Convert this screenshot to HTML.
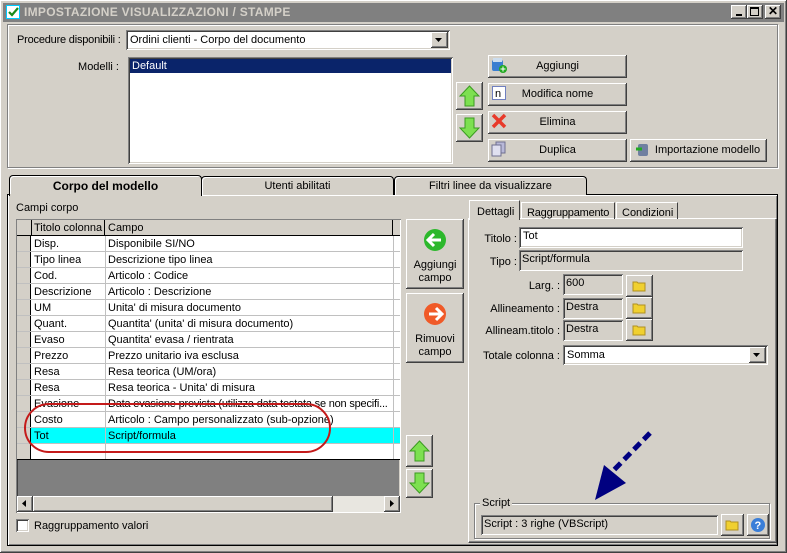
<!DOCTYPE html>
<html><head><meta charset="utf-8"><style>
*{box-sizing:border-box;margin:0;padding:0}
body{width:787px;height:553px;background:#d4d0c8;font-family:"Liberation Sans",sans-serif;font-size:11px;color:#000;position:relative;overflow:hidden;white-space:nowrap}
.a{position:absolute}
.btn{position:absolute;background:#d4d0c8;box-shadow:inset -1px -1px #404040,inset 1px 1px #fff,inset -2px -2px #808080;text-align:center}
.sunk{position:absolute;background:#fff;box-shadow:inset 1px 1px #808080,inset -1px -1px #fff,inset 2px 2px #404040,inset -2px -2px #d4d0c8}
.etch{position:absolute;border:1px solid #808080;box-shadow:1px 1px #fff,inset 1px 1px #fff}
.lbl{position:absolute;text-align:right}
.row{position:absolute;left:17px;width:383px;height:16px;border-bottom:1px solid #c0c0c0;background:#fff;overflow:hidden}
.row span{position:absolute;top:2px;overflow:hidden}
.ind{position:absolute;left:0;top:0;width:14px;height:16px;background:#d4d0c8;border-right:1px solid #000;border-bottom:1px solid #808080}
.c1{position:absolute;left:88px;top:0;height:16px;border-left:1px solid #c0c0c0}
.c2{position:absolute;left:376px;top:0;height:16px;border-left:1px solid #c0c0c0}
.tab{position:absolute;background:#d4d0c8;border:1px solid #000;border-bottom:none;border-radius:4px 4px 0 0;box-shadow:inset 1px 1px #fff;text-align:center}
</style></head><body>
<div class="a" style="left:0;top:0;width:787px;height:553px;box-shadow:inset -1px -1px #404040,inset 1px 1px #fff,inset -2px -2px #808080"></div>
<div class="a" style="left:3px;top:3px;width:781px;height:19px;background:#808080"></div>
<div class="a" style="left:6px;top:5px;width:14px;height:14px;background:#fff;border:1px solid #0cf"><svg width="12" height="12"><path d="M2 6l3 3 6-7" stroke="#1a8a1a" stroke-width="2.2" fill="none"/></svg></div>
<div class="a" style="left:24px;top:5px;font-weight:bold;font-size:12px;color:#d4d0c8;letter-spacing:0.3px">IMPOSTAZIONE VISUALIZZAZIONI / STAMPE</div>
<div class="btn" style="left:731px;top:5px;width:16px;height:14px"><div class="a" style="left:5px;top:9px;width:6px;height:2px;background:#000"></div></div>
<div class="btn" style="left:747px;top:5px;width:16px;height:14px"><div class="a" style="left:3px;top:2px;width:9px;height:9px;border:1px solid #000;border-top-width:2px"></div></div>
<div class="btn" style="left:765px;top:5px;width:16px;height:14px;font-weight:bold;font-size:12px;line-height:13px">✕</div>

<div class="etch" style="left:7px;top:24px;width:771px;height:144px"></div>
<div class="a" style="left:17px;top:34px;letter-spacing:-0.2px">Procedure disponibili :</div>
<div class="sunk" style="left:126px;top:30px;width:324px;height:20px"><span class="a" style="left:4px;top:4px">Ordini clienti - Corpo del documento</span>
<div class="btn" style="left:305px;top:2px;width:17px;height:16px"><svg class="a" style="left:4px;top:6px" width="8" height="5"><path d="M0 0h7l-3.5 4z"/></svg></div></div>
<div class="lbl" style="left:60px;top:61px;width:59px">Modelli :</div>
<div class="sunk" style="left:128px;top:57px;width:325px;height:107px"><div class="a" style="left:2px;top:2px;width:321px;height:14px;background:#0a246a;color:#fff;padding:1px 2px">Default</div></div>

<div class="btn" style="left:456px;top:82px;width:27px;height:28px"><svg class="a" style="left:3px;top:3px" width="21" height="22"><path d="M10.5 1L20 11h-5v10H6V11H1z" fill="#7de050" stroke="#3a9a20"/></svg></div>
<div class="btn" style="left:456px;top:114px;width:27px;height:28px"><svg class="a" style="left:3px;top:3px" width="21" height="22"><path d="M10.5 21L20 11h-5V1H6v10H1z" fill="#7de050" stroke="#3a9a20"/></svg></div>

<div class="btn" style="left:488px;top:55px;width:139px;height:23px;line-height:23px">Aggiungi<svg class="a" style="left:3px;top:2px" width="16" height="16"><rect x="1" y="3" width="11" height="11" rx="2" fill="#3a7ed0"/><rect x="2" y="1" width="9" height="4" fill="#cde"/><circle cx="12" cy="12" r="4" fill="#2a2"/><path d="M12 9.5v5M9.5 12h5" stroke="#fff"/></svg></div>
<div class="btn" style="left:488px;top:83px;width:139px;height:23px;line-height:23px">Modifica nome<svg class="a" style="left:4px;top:3px" width="15" height="15"><rect x="0.5" y="0.5" width="13" height="13" fill="#fff" stroke="#7080c0"/><text x="3" y="11" font-size="11" font-family="Liberation Sans">n</text></svg></div>
<div class="btn" style="left:488px;top:111px;width:139px;height:23px;line-height:23px">Elimina<svg class="a" style="left:3px;top:2px" width="16" height="16"><path d="M2 2L14 14M14 2L2 14" stroke="#e83a2a" stroke-width="3.5"/></svg></div>
<div class="btn" style="left:488px;top:139px;width:139px;height:23px;line-height:23px">Duplica<svg class="a" style="left:3px;top:2px" width="16" height="16"><rect x="5" y="1" width="9" height="11" fill="#b8b8d8" stroke="#707090"/><rect x="1" y="4" width="9" height="11" fill="#e0e0f0" stroke="#707090"/></svg></div>
<div class="btn" style="left:630px;top:139px;width:137px;height:23px;line-height:23px;padding-left:18px">Importazione modello<svg class="a" style="left:6px;top:3px" width="14" height="15"><rect x="2" y="2" width="10" height="12" rx="2" fill="#7080a0"/><path d="M0 7h6" stroke="#2a2" stroke-width="3"/></svg></div>

<div class="a" style="left:7px;top:194px;width:771px;height:352px;border:1px solid #000;box-shadow:inset 1px 1px #fff,inset -1px -1px #808080"></div>
<div class="tab" style="left:9px;top:175px;width:193px;height:21px;font-weight:bold;font-size:12px;line-height:21px">Corpo del modello</div>
<div class="tab" style="left:201px;top:176px;width:193px;height:19px;line-height:18px">Utenti abilitati</div>
<div class="tab" style="left:394px;top:176px;width:193px;height:19px;line-height:18px">Filtri linee da visualizzare</div>
<div class="a" style="left:10px;top:194px;width:191px;height:2px;background:#d4d0c8"></div>

<div class="a" style="left:16px;top:202px">Campi corpo</div>
<div class="sunk" style="left:16px;top:219px;width:385px;height:294px;background:#808080"></div>
<div class="a" style="left:17px;top:220px;width:383px;height:16px;background:#d4d0c8;border-bottom:1px solid #000">
<div class="a" style="left:14px;top:0;height:16px;border-left:1px solid #000"></div>
<span class="a" style="left:17px;top:2px">Titolo colonna</span>
<div class="a" style="left:87px;top:0;height:16px;border-left:1px solid #000"></div>
<span class="a" style="left:91px;top:2px">Campo</span>
<div class="a" style="left:375px;top:0;height:16px;border-left:1px solid #000"></div></div>
<div class="row" style="top:236px"><div class="ind"></div><span style="left:17px">Disp.</span><div class="c1"></div><span style="left:91px">Disponibile SI/NO</span><div class="c2"></div></div>
<div class="row" style="top:252px"><div class="ind"></div><span style="left:17px">Tipo linea</span><div class="c1"></div><span style="left:91px">Descrizione tipo linea</span><div class="c2"></div></div>
<div class="row" style="top:268px"><div class="ind"></div><span style="left:17px">Cod.</span><div class="c1"></div><span style="left:91px">Articolo : Codice</span><div class="c2"></div></div>
<div class="row" style="top:284px"><div class="ind"></div><span style="left:17px">Descrizione</span><div class="c1"></div><span style="left:91px">Articolo : Descrizione</span><div class="c2"></div></div>
<div class="row" style="top:300px"><div class="ind"></div><span style="left:17px">UM</span><div class="c1"></div><span style="left:91px">Unita' di misura documento</span><div class="c2"></div></div>
<div class="row" style="top:316px"><div class="ind"></div><span style="left:17px">Quant.</span><div class="c1"></div><span style="left:91px">Quantita' (unita' di misura documento)</span><div class="c2"></div></div>
<div class="row" style="top:332px"><div class="ind"></div><span style="left:17px">Evaso</span><div class="c1"></div><span style="left:91px">Quantita' evasa / rientrata</span><div class="c2"></div></div>
<div class="row" style="top:348px"><div class="ind"></div><span style="left:17px">Prezzo</span><div class="c1"></div><span style="left:91px">Prezzo unitario iva esclusa</span><div class="c2"></div></div>
<div class="row" style="top:364px"><div class="ind"></div><span style="left:17px">Resa</span><div class="c1"></div><span style="left:91px">Resa teorica (UM/ora)</span><div class="c2"></div></div>
<div class="row" style="top:380px"><div class="ind"></div><span style="left:17px">Resa</span><div class="c1"></div><span style="left:91px">Resa teorica - Unita' di misura</span><div class="c2"></div></div>
<div class="row" style="top:396px"><div class="ind"></div><span style="left:17px">Evasione</span><div class="c1"></div><span style="left:91px;width:284px;letter-spacing:-0.2px">Data evasione prevista (utilizza data testata se non specifi...</span><div class="c2"></div></div>
<div class="row" style="top:412px"><div class="ind"></div><span style="left:17px">Costo</span><div class="c1"></div><span style="left:91px">Articolo : Campo personalizzato (sub-opzione)</span><div class="c2"></div></div>
<div class="row" style="top:428px;background:#00ffff"><div class="ind"></div><span style="left:17px">Tot</span><div class="c1"></div><span style="left:91px">Script/formula</span><div class="c2"></div></div>
<div class="row" style="top:444px;border-bottom:1px solid #000"><div class="ind"></div><div class="c1"></div><div class="c2"></div></div>
<div class="a" style="left:17px;top:496px;width:383px;height:16px;background:#e8e6e0"></div>
<div class="btn" style="left:17px;top:496px;width:16px;height:16px"><svg class="a" style="left:5px;top:4px" width="5" height="8"><path d="M4 0v7L0 3.5z"/></svg></div>
<div class="btn" style="left:33px;top:496px;width:300px;height:16px"></div>
<div class="btn" style="left:384px;top:496px;width:16px;height:16px"><svg class="a" style="left:6px;top:4px" width="5" height="8"><path d="M0 0v7l4-3.5z"/></svg></div>

<svg class="a" style="left:20px;top:400px" width="320" height="60"><rect x="5" y="4" width="305" height="48" rx="24" ry="24" fill="none" stroke="#c41a1a" stroke-width="2"/></svg>

<div class="btn" style="left:406px;top:219px;width:58px;height:70px;padding-top:40px;line-height:13px">Aggiungi<br>campo<svg class="a" style="left:17px;top:9px" width="24" height="24"><circle cx="12" cy="12" r="11" fill="#2cb82c"/><path d="M6 12h12M11 6l-6 6 6 6" stroke="#fff" stroke-width="3" fill="none"/></svg></div>
<div class="btn" style="left:406px;top:293px;width:58px;height:70px;padding-top:40px;line-height:13px">Rimuovi<br>campo<svg class="a" style="left:17px;top:9px" width="24" height="24"><circle cx="12" cy="12" r="11" fill="#f05a28"/><path d="M6 12h12M13 6l6 6-6 6" stroke="#fff" stroke-width="3" fill="none"/></svg></div>
<div class="btn" style="left:406px;top:435px;width:27px;height:32px"><svg class="a" style="left:3px;top:5px" width="21" height="22"><path d="M10.5 1L20 11h-5v10H6V11H1z" fill="#7de050" stroke="#3a9a20"/></svg></div>
<div class="btn" style="left:406px;top:469px;width:27px;height:29px"><svg class="a" style="left:3px;top:3px" width="21" height="22"><path d="M10.5 21L20 11h-5V1H6v10H1z" fill="#7de050" stroke="#3a9a20"/></svg></div>

<div class="sunk" style="left:16px;top:519px;width:13px;height:13px"></div>
<div class="a" style="left:34px;top:520px">Raggruppamento valori</div>

<div class="a" style="left:468px;top:218px;width:309px;height:325px;border:1px solid #fff;border-right-color:#404040;border-bottom-color:#404040;box-shadow:inset -1px -1px #808080"></div>
<div class="a" style="left:469px;top:200px;width:51px;height:20px;background:#d4d0c8;border-top:1px solid #fff;border-left:1px solid #fff;border-right:1px solid #404040;padding:5px 0 0 7px">Dettagli</div>
<div class="a" style="left:521px;top:202px;width:94px;height:17px;border-top:1px solid #fff;border-left:1px solid #fff;border-right:1px solid #404040;padding:4px 0 0 5px;letter-spacing:-0.2px">Raggruppamento</div>
<div class="a" style="left:616px;top:202px;width:62px;height:17px;border-top:1px solid #fff;border-left:1px solid #fff;border-right:1px solid #404040;padding:4px 0 0 5px">Condizioni</div>

<div class="lbl" style="left:470px;top:233px;width:47px">Titolo :</div>
<div class="sunk" style="left:519px;top:227px;width:224px;height:21px"><span class="a" style="left:4px;top:3px">Tot</span></div>
<div class="lbl" style="left:470px;top:256px;width:47px">Tipo :</div>
<div class="sunk" style="left:519px;top:250px;width:224px;height:21px;background:#d4d0c8"><span class="a" style="left:3px;top:3px">Script/formula</span></div>
<div class="lbl" style="left:470px;top:280px;width:90px">Larg. :</div>
<div class="sunk" style="left:563px;top:274px;width:60px;height:21px;background:#d4d0c8"><span class="a" style="left:3px;top:3px">600</span></div>
<div class="lbl" style="left:470px;top:303px;width:90px">Allineamento :</div>
<div class="sunk" style="left:563px;top:298px;width:60px;height:21px;background:#d4d0c8"><span class="a" style="left:3px;top:3px">Destra</span></div>
<div class="lbl" style="left:470px;top:325px;width:90px">Allineam.titolo :</div>
<div class="sunk" style="left:563px;top:320px;width:60px;height:21px;background:#d4d0c8"><span class="a" style="left:3px;top:3px">Destra</span></div>
<div class="btn" style="left:626px;top:275px;width:27px;height:22px"><svg class="a" style="left:6px;top:4px" width="15" height="13"><path d="M1 3h4l1 1h7v8H1z" fill="#f0d030" stroke="#b09020"/></svg></div>
<div class="btn" style="left:626px;top:297px;width:27px;height:22px"><svg class="a" style="left:6px;top:4px" width="15" height="13"><path d="M1 3h4l1 1h7v8H1z" fill="#f0d030" stroke="#b09020"/></svg></div>
<div class="btn" style="left:626px;top:319px;width:27px;height:22px"><svg class="a" style="left:6px;top:4px" width="15" height="13"><path d="M1 3h4l1 1h7v8H1z" fill="#f0d030" stroke="#b09020"/></svg></div>
<div class="lbl" style="left:470px;top:350px;width:90px">Totale colonna :</div>
<div class="sunk" style="left:563px;top:345px;width:205px;height:20px"><span class="a" style="left:4px;top:4px">Somma</span>
<div class="btn" style="left:186px;top:2px;width:17px;height:16px"><svg class="a" style="left:4px;top:6px" width="8" height="5"><path d="M0 0h7l-3.5 4z"/></svg></div></div>

<div class="etch" style="left:474px;top:503px;width:296px;height:36px"></div>
<div class="a" style="left:480px;top:497px;padding:0 2px;background:#d4d0c8">Script</div>
<div class="sunk" style="left:481px;top:515px;width:237px;height:20px;background:#d4d0c8"><span class="a" style="left:3px;top:3px">Script : 3 righe (VBScript)</span></div>
<div class="btn" style="left:721px;top:514px;width:23px;height:22px"><svg class="a" style="left:4px;top:4px" width="15" height="13"><path d="M1 3h4l1 1h7v8H1z" fill="#f0d030" stroke="#b09020"/></svg></div>
<div class="btn" style="left:747px;top:514px;width:22px;height:22px"><svg class="a" style="left:3px;top:3px" width="16" height="16"><circle cx="8" cy="8" r="7" fill="#3a7ed8"/><text x="4.5" y="12" font-size="11" font-weight="bold" fill="#fff" font-family="Liberation Sans">?</text></svg></div>

<svg class="a" style="left:585px;top:428px" width="80" height="80"><path d="M65 5L28 43" stroke="#000080" stroke-width="5" stroke-dasharray="9,5" fill="none"/><path d="M10 72L19 37L41 55z" fill="#000080"/></svg>
</body></html>
